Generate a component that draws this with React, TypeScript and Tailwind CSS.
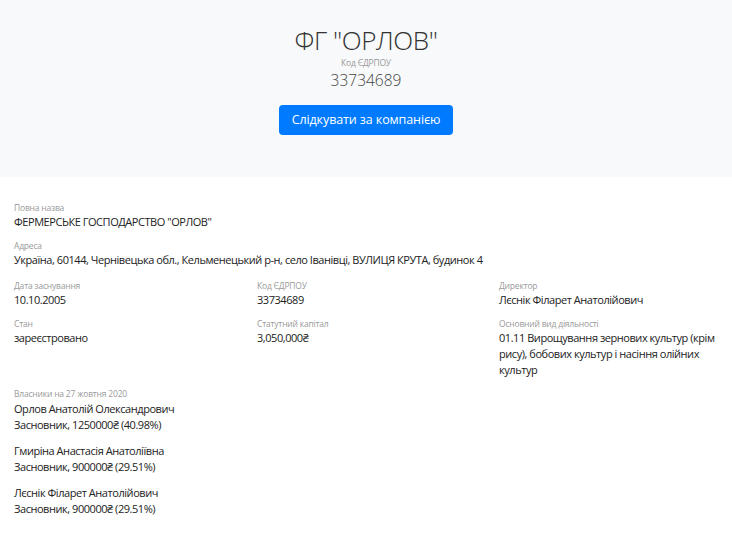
import React from "react";

const font = { fontFamily: '"Open Sans", "Noto Sans", sans-serif' };

function Field({ label, children, extra = false }: { label: string; children: React.ReactNode; extra?: boolean }) {
  return (
    <div className={extra ? "mb-[11px]" : "mb-[9px]"}>
      <div className="text-[8.5px] leading-[13px] tracking-[-0.2px] text-[#9a9a9a]">{label}</div>
      <div className="text-[11px] leading-[16px] tracking-[-0.45px] text-[#222]">{children}</div>
    </div>
  );
}

const owners = [
  ["Орлов Анатолій Олександрович", "Засновник, 1250000₴ (40.98%)"],
  ["Гмиріна Анастасія Анатоліївна", "Засновник, 900000₴ (29.51%)"],
  ["Лєснік Філарет Анатолійович", "Засновник, 900000₴ (29.51%)"],
];

export default function App() {
  return (
    <div className="w-[732px] min-h-[534px] bg-white" style={font}>
      <div className="bg-[#f8f9fa] h-[177px] flex flex-col items-center pt-[22px]">
        <div className="text-[26px] leading-[36px] font-light tracking-[-0.4px] text-[#333]">ФГ "ОРЛОВ"</div>
        <div className="text-[8.5px] leading-[12px] text-[#999] tracking-[-0.2px] mt-[-1px]">Код ЄДРПОУ</div>
        <div className="text-[15.5px] leading-[20px] font-light text-[#444] mt-[1px]">33734689</div>
        <button className="mt-[15px] h-[30px] px-[13px] rounded-[4px] bg-[#007bff] text-white text-[12.5px] tracking-[-0.1px]">
          Слідкувати за компанією
        </button>
      </div>
      <div className="px-[14px] pt-[24px]">
        <Field label="Повна назва">ФЕРМЕРСЬКЕ ГОСПОДАРСТВО "ОРЛОВ"</Field>
        <Field label="Адреса" extra>Україна, 60144, Чернівецька обл., Кельменецький р-н, село Іванівці, ВУЛИЦЯ КРУТА, будинок 4</Field>
        <div className="grid grid-cols-[243px_242px_1fr]">
          <Field label="Дата заснування">10.10.2005</Field>
          <Field label="Код ЄДРПОУ">33734689</Field>
          <Field label="Директор">Лєснік Філарет Анатолійович</Field>
          <Field label="Стан">зареєстровано</Field>
          <Field label="Статутний капітал">3,050,000₴</Field>
          <Field label="Основний вид діяльності">01.11 Вирощування зернових культур (крім рису), бобових культур і насіння олійних культур</Field>
        </div>
        <div className="text-[8.5px] leading-[14px] tracking-[-0.2px] text-[#9a9a9a]">Власники на 27 жовтня 2020</div>
        {owners.map(([n, d]) => (
          <div key={n} className="mb-[10px] text-[11px] leading-[16px] tracking-[-0.45px] text-[#222]">
            <div>{n}</div>
            <div>{d}</div>
          </div>
        ))}
      </div>
    </div>
  );
}
